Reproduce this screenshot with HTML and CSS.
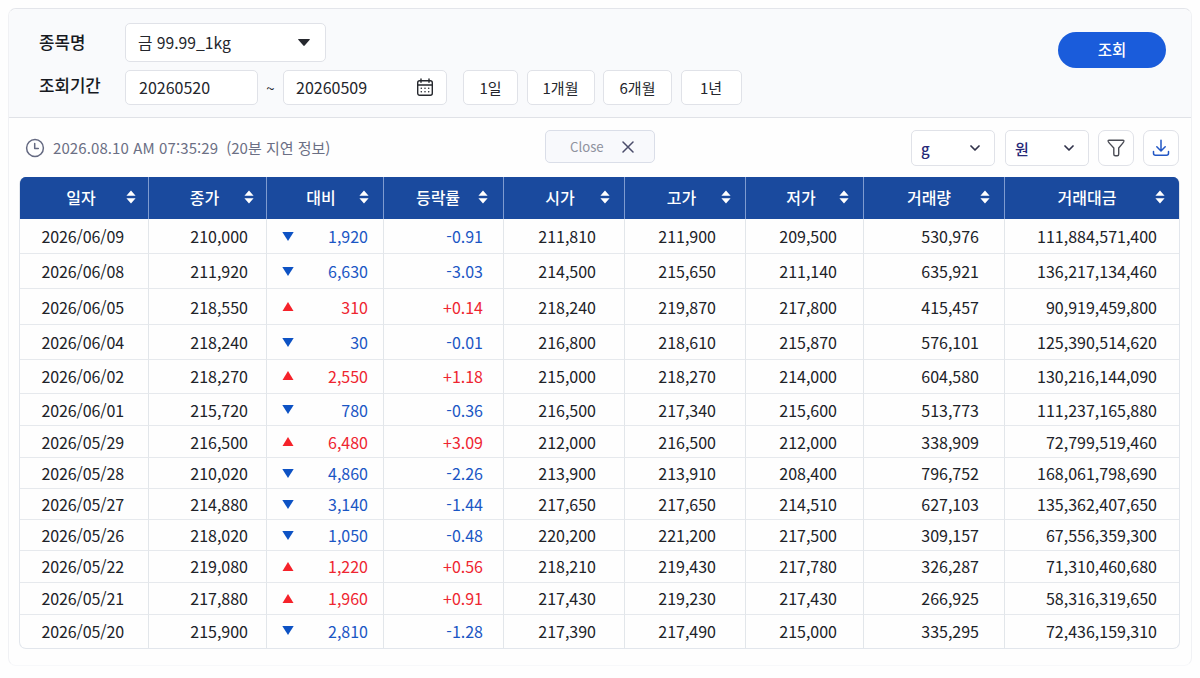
FILE: index.html
```html
<!DOCTYPE html>
<html lang="ko">
<head>
  <meta charset="UTF-8">
  <meta name="viewport" content="width=device-width, initial-scale=1.0">
  <title>금 시세 조회</title>
  <link rel="stylesheet" href="styles.css">
</head>
<body>
  <div class="panel">
    <form class="search" onsubmit="return false">
      <div class="fields">
        <div class="field-row">
          <span class="label">종목명</span>
          <div class="box item-select">
            <span>금 99.99_1kg</span>
            <svg width="12" height="7" viewBox="0 0 12 7"><path d="M0.6 0h10.8q.8 0 .3.7L6.7 6.6q-.7.7-1.4 0L.3.7Q-.2 0 .6 0z" fill="#26282e"/></svg>
          </div>
        </div>
        <div class="field-row period">
          <span class="label">조회기간</span>
          <div class="box date-from"><span>20260520</span></div>
          <span class="tilde">~</span>
          <div class="box date-to">
            <span>20260509</span>
            <svg width="18" height="19" viewBox="0 0 18 19" fill="none" stroke="#26282e" stroke-width="1.4" stroke-linecap="round">
              <rect x="1.7" y="2.7" width="14.6" height="14.6" rx="2"/>
              <path d="M1.7 7h14.6M5 1v3.2M13 1v3.2"/>
              <path d="M5.3 10.3h.01M9 10.3h.01M12.7 10.3h.01M5.3 13.7h.01M9 13.7h.01M12.7 13.7h.01" stroke-width="1.6"/>
            </svg>
          </div>
          <div class="ranges">
            <button class="box range w55">1일</button>
            <button class="box range w68">1개월</button>
            <button class="box range w69">6개월</button>
            <button class="box range w61">1년</button>
          </div>
        </div>
      </div>
      <button class="submit">조회</button>
    </form>

    <div class="toolbar">
      <div class="time">
        <svg width="20" height="20" viewBox="0 0 20 20" fill="none" stroke="#646981" stroke-width="1.5" stroke-linecap="round" stroke-linejoin="round">
          <circle cx="10" cy="10" r="8.4"/>
          <path d="M9.7 5.4v5h3.6"/>
        </svg>
        <span>2026.08.10 AM 07:35:29</span>
        <span class="delay">(20분 지연 정보)</span>
      </div>
      <button class="close">
        <span>Close</span>
        <svg width="12" height="12" viewBox="0 0 12 12" fill="none" stroke="#4b4d6b" stroke-width="1.5" stroke-linecap="round"><path d="M1 1l10 10M11 1L1 11"/></svg>
      </button>
      <div class="tools">
        <div class="box unit">
          <span>g</span>
          <svg width="10" height="7" viewBox="0 0 10 7" fill="none" stroke="#30324a" stroke-width="1.7" stroke-linecap="round" stroke-linejoin="round"><path d="M1 1l4 4 4-4"/></svg>
        </div>
        <div class="box unit">
          <span>원</span>
          <svg width="10" height="7" viewBox="0 0 10 7" fill="none" stroke="#30324a" stroke-width="1.7" stroke-linecap="round" stroke-linejoin="round"><path d="M1 1l4 4 4-4"/></svg>
        </div>
        <button class="box icon">
          <svg width="18" height="18" viewBox="0 0 18 18" fill="none" stroke="#4a4c55" stroke-width="1.4" stroke-linejoin="round"><path d="M2 1.2h14q1 0 .8 1.2-.2.9-1 1.7L11.7 9v6.2q0 1.5-1.5 1.5H8.4q-1.6 0-1.6-1.5V9L2.3 4.1Q1.5 3.3 1.2 2.4 1 1.2 2 1.2z"/></svg>
        </button>
        <button class="box icon">
          <svg width="18" height="18" viewBox="0 0 18 18" fill="none" stroke="#2257c5" stroke-width="1.5" stroke-linecap="round" stroke-linejoin="round"><path d="M9 1.3v10.5M4.8 7.8L9 12l4.2-4.2M1.5 12.5v1.7q0 2 2 2h11q2 0 2-2v-1.7"/></svg>
        </button>
      </div>
    </div>

    <div class="table-wrap">
      <table>
        <colgroup>
          <col class="c1"><col class="c2"><col class="c3"><col class="c4"><col class="c5"><col class="c6"><col class="c7"><col class="c8"><col class="c9">
        </colgroup>
        <thead>
          <tr id="headRow"></tr>
        </thead>
        <tbody id="priceBody"></tbody>
      </table>
    </div>
  </div>

  <script>
    const columns = ['일자', '종가', '대비', '등락률', '시가', '고가', '저가', '거래량', '거래대금'];

    // 일자, 종가, 대비, 등락률, 시가, 고가, 저가, 거래량, 거래대금
    const prices = [
      ['2026/06/09', '210,000', '1,920', '-0.91', '211,810', '211,900', '209,500', '530,976', '111,884,571,400'],
      ['2026/06/08', '211,920', '6,630', '-3.03', '214,500', '215,650', '211,140', '635,921', '136,217,134,460'],
      ['2026/06/05', '218,550', '310', '+0.14', '218,240', '219,870', '217,800', '415,457', '90,919,459,800'],
      ['2026/06/04', '218,240', '30', '-0.01', '216,800', '218,610', '215,870', '576,101', '125,390,514,620'],
      ['2026/06/02', '218,270', '2,550', '+1.18', '215,000', '218,270', '214,000', '604,580', '130,216,144,090'],
      ['2026/06/01', '215,720', '780', '-0.36', '216,500', '217,340', '215,600', '513,773', '111,237,165,880'],
      ['2026/05/29', '216,500', '6,480', '+3.09', '212,000', '216,500', '212,000', '338,909', '72,799,519,460'],
      ['2026/05/28', '210,020', '4,860', '-2.26', '213,900', '213,910', '208,400', '796,752', '168,061,798,690'],
      ['2026/05/27', '214,880', '3,140', '-1.44', '217,650', '217,650', '214,510', '627,103', '135,362,407,650'],
      ['2026/05/26', '218,020', '1,050', '-0.48', '220,200', '221,200', '217,500', '309,157', '67,556,359,300'],
      ['2026/05/22', '219,080', '1,220', '+0.56', '218,210', '219,430', '217,780', '326,287', '71,310,460,680'],
      ['2026/05/21', '217,880', '1,960', '+0.91', '217,430', '219,230', '217,430', '266,925', '58,316,319,650'],
      ['2026/05/20', '215,900', '2,810', '-1.28', '217,390', '217,490', '215,000', '335,295', '72,436,159,310']
    ];

    const sortIcon = `<svg width="10" height="14" viewBox="0 0 10 14" fill="#fff"><path d="M5 .6L9.6 5.8H.4zM5 13.4L.4 8.2h9.2z"/></svg>`;
    const arrows = {
      up: `<svg width="12" height="9" viewBox="0 0 12 9"><path d="M6 0l5.5 9H.5z" fill="#f5222a"/></svg>`,
      down: `<svg width="12" height="9" viewBox="0 0 12 9"><path d="M.3 0h11.4L6 9z" fill="#0d52c4"/></svg>`
    };

    document.getElementById('headRow').innerHTML = columns
      .map(name => `<th><div class="head"><span>${name}</span>${sortIcon}</div></th>`)
      .join('');

    document.getElementById('priceBody').innerHTML = prices.map(p => {
      const dir = p[3].startsWith('+') ? 'up' : 'down';
      return `<tr>
        <td>${p[0]}</td>
        <td>${p[1]}</td>
        <td class="${dir}"><div class="diff">${arrows[dir]}<span>${p[2]}</span></div></td>
        <td class="${dir}">${p[3]}</td>
        <td>${p[4]}</td>
        <td>${p[5]}</td>
        <td>${p[6]}</td>
        <td>${p[7]}</td>
        <td>${p[8]}</td>
      </tr>`;
    }).join('');
  </script>
</body>
</html>
```
FILE: styles.css
```css
* {
  box-sizing: border-box;
}
body {
  margin: 0;
  padding: 8px;
  background: #fefefe;
  color: #24262c;
  font-family: "Noto Sans CJK KR", sans-serif;
  font-size: 16px;
  line-height: 24px;
  font-variant-ligatures: no-contextual;
}
svg {
  display: block;
  flex: none;
}
button {
  padding: 0;
  font: inherit;
  color: inherit;
}
.panel {
  height: 658px;
  border: 1px solid #e3e5ea;
  border-color: #e3e5ea #f0f1f4 #f7f8fa;
  border-radius: 8px;
  background: #fefefe;
}

/* search form */
.search {
  display: flex;
  justify-content: space-between;
  height: 109px;
  padding: 14px 25px 0 30px;
  background: #f9fafc;
  border-bottom: 1px solid #e0e2e7;
  border-radius: 8px 8px 0 0;
}
.field-row {
  display: flex;
  align-items: center;
}
.period {
  margin-top: 8px;
}
.label {
  width: 86px;
  padding-bottom: 1px;
  color: #17191f;
  font-size: 16.8px;
  font-weight: 500;
}
.period .label {
  padding-bottom: 6px;
}
.box {
  display: flex;
  align-items: center;
  background: #fff;
  border: 1px solid #e0e2e8;
  border-radius: 5px;
}
.item-select {
  width: 201px;
  height: 39px;
  padding: 0 15px 0 12px;
  justify-content: space-between;
  font-size: 15.7px;
}
.date-from span,
.date-to span {
  padding-bottom: 2px;
}
.date-from {
  width: 133px;
  height: 35px;
  padding-left: 13px;
}
.tilde {
  width: 25px;
  text-align: center;
  font-size: 15px;
}
.date-to {
  width: 164px;
  height: 35px;
  padding: 0 12px;
  justify-content: space-between;
}
.ranges {
  display: flex;
  gap: 8.5px;
  margin-left: 16px;
}
.range {
  justify-content: center;
  height: 35px;
  font-size: 15px;
}
.w55 { width: 55px; }
.w68 { width: 68px; }
.w69 { width: 69px; }
.w61 { width: 61px; }
.submit {
  width: 108px;
  height: 36px;
  margin-top: 9px;
  padding-bottom: 2px;
  border: 0;
  border-radius: 18px;
  background: #1a5cdb;
  color: #fff;
  font-size: 15.5px;
  font-weight: 500;
}

/* toolbar */
.toolbar {
  display: grid;
  grid-template-columns: 520px 110px 1fr;
  padding: 12px 12px 0 16px;
  height: 59px;
}
.time {
  display: flex;
  align-items: center;
  height: 36px;
  color: #6b6f84;
  font-size: 15px;
  letter-spacing: 0.1px;
}
.time svg {
  margin-right: 8px;
}
.delay {
  margin-left: 8px;
  letter-spacing: 0;
}
.close {
  display: flex;
  align-items: center;
  height: 33px;
  padding: 0 20px 0 24px;
  justify-content: space-between;
  border: 1px solid #dadee8;
  border-radius: 5px;
  background: #f8f9fc;
  color: #8f929e;
  font-size: 13.2px;
}
.tools {
  display: flex;
  justify-content: flex-end;
  gap: 10px;
}
.unit {
  width: 84px;
  height: 36px;
  padding: 0 14px 0 9px;
  justify-content: space-between;
  color: #272a78;
  font-size: 15px;
  font-weight: 500;
}
.unit span {
  padding-top: 2px;
}
.icon {
  width: 36px;
  height: 36px;
  justify-content: center;
  border-radius: 7px;
}
.unit + .icon {
  margin-left: -1px;
}
.icon:last-child {
  margin-left: -1px;
}

/* price table */
.table-wrap {
  width: 1161px;
  margin-left: 10px;
  border: 1px solid #e2e6ec;
  border-top: 0;
  border-radius: 7px;
  background: linear-gradient(#1a4a9e 41px, transparent 41px);
  background-origin: border-box;
  overflow: hidden;
}
table {
  width: 100%;
  table-layout: fixed;
  border-collapse: separate;
  border-spacing: 0;
}
.c1 { width: 129px; }
.c2 { width: 118px; }
.c3 { width: 117px; }
.c4 { width: 120px; }
.c5 { width: 121px; }
.c6 { width: 121px; }
.c7 { width: 118px; }
.c8 { width: 141px; }
th {
  height: 42px;
  padding: 0 0 2px;
  background: #1a4a9e;
  color: #fff;
  font-size: 16px;
  font-weight: 500;
  border-right: 1px solid #7e9bd0;
}
.head {
  display: flex;
  align-items: center;
  padding-right: 14px;
}
.head span {
  flex: 1;
  text-align: center;
  padding: 0 0 1px 16px;
}
th:nth-child(-n+2) .head { padding-right: 12px; }
th:nth-child(4) .head { padding-right: 15px; }
th:nth-child(4) span,
th:nth-child(n+8) span { padding-left: 14px; }
th:nth-child(6) span,
th:nth-child(7) span { padding-left: 17px; }
td {
  height: 35px;
  padding: 0;
  text-align: right;
  color: #202228;
  border-right: 1px solid #e2e6ea;
  border-bottom: 1px solid #e6e9ed;
}
th:last-child,
td:last-child {
  border-right: 0;
}
tr:last-child td {
  border-bottom: 0;
}
td:nth-child(1) {
  padding-right: 24px;
  letter-spacing: -0.1px;
}
td:nth-child(2) { padding-right: 18px; }
td:nth-child(3) { padding-right: 15px; }
td:nth-child(4) { padding-right: 20px; }
td:nth-child(5) { padding-right: 28px; }
td:nth-child(6) { padding-right: 29px; }
td:nth-child(7) { padding-right: 26px; }
td:nth-child(8) { padding-right: 25px; }
td:nth-child(9) { padding-right: 22px; }
tbody tr:nth-child(3) td { height: 36px; }
tbody tr:nth-child(5) td { height: 34px; padding-bottom: 2px; }
tbody tr:nth-child(n+6) td { height: 32px; }
tbody tr:nth-child(n+8) td { height: 31px; }
tbody tr:nth-child(n+11) td { height: 32px; padding-bottom: 1px; }
tbody tr:nth-child(13) td { height: 33px; padding-bottom: 2px; }
.diff {
  display: flex;
  align-items: center;
  justify-content: space-between;
  padding-left: 15px;
}
td.up {
  color: #ee2530;
}
td.down {
  color: #1a56c4;
}
```
